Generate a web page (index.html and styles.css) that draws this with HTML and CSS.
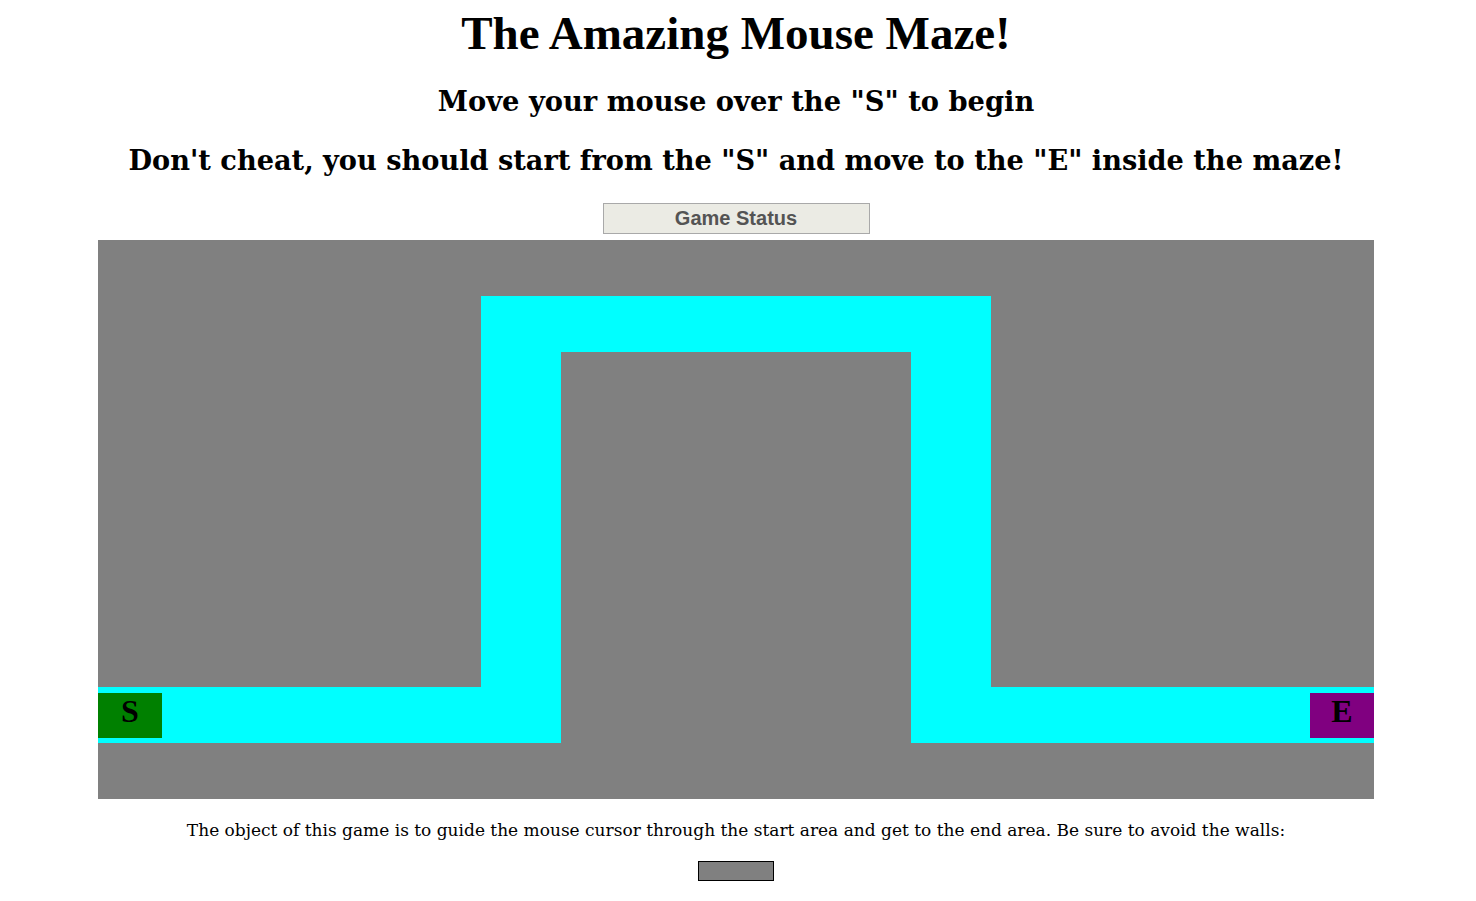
FILE: index.html
```html
<!DOCTYPE html>
<html>
<head>
<meta charset="utf-8">
<title>The Amazing Mouse Maze!</title>
<link rel="stylesheet" href="styles.css">
</head>
<body>
<h1 class="title">The Amazing Mouse Maze!</h1>
<h2 class="sub">Move your mouse over the "S" to begin</h2>
<h2 class="sub sub2">Don't cheat, you should start from the "S" and move to the "E" inside the maze!</h2>
<div class="status-row"><button class="status" disabled>Game Status</button></div>
<div class="maze">
  <div class="path p-left"><div class="start">S</div></div>
  <div class="path p-lv"></div>
  <div class="path p-top"></div>
  <div class="path p-rv"></div>
  <div class="path p-right"><div class="end">E</div></div>
</div>
<p class="desc">The object of this game is to guide the mouse cursor through the start area and get to the end area. Be sure to avoid the walls:</p>
<div class="wall-row"><div class="wall-sample"></div></div>
</body>
</html>
```
FILE: styles.css
```css
html, body { margin: 0; padding: 0; background: #fff; }
body { padding: 0 10px 0 6px; font-family: "DejaVu Serif", serif; color: #000; }
.title {
  font-family: "Liberation Serif", serif;
  font-weight: bold;
  font-size: 47px;
  line-height: 56px;
  text-align: center;
  margin: 5px 0 0;
}
.sub {
  font-family: "DejaVu Serif", serif;
  font-weight: bold;
  font-size: 27.3px;
  line-height: 40px;
  text-align: center;
  margin: 20px 0 0;
}
.sub2 { margin-top: 19px; font-size: 27.2px; }
.status-row { display: flex; justify-content: center; margin-top: 23px; }
.status {
  width: 267px;
  height: 31px;
  background: #ebebe4;
  border: 1px solid #a9a9a9;
  color: #545454;
  font-family: "Liberation Sans", Arial, sans-serif;
  font-weight: bold;
  font-size: 20px;
  padding: 0;
}
.maze {
  width: 1276px;
  height: 559px;
  margin: 6px auto 0;
  background: #808080;
  display: grid;
  grid-template-columns: 383px 80px 350px 80px 383px;
  grid-template-rows: 56px 56px 335px 56px 56px;
}
.path { background: #00ffff; }
.p-left { grid-column: 1 / 3; grid-row: 4; display: flex; align-items: flex-start; padding-top: 6px; }
.p-lv { grid-column: 2; grid-row: 2 / 5; }
.p-top { grid-column: 2 / 5; grid-row: 2; }
.p-rv { grid-column: 4; grid-row: 2 / 5; }
.p-right { grid-column: 4 / 6; grid-row: 4; display: flex; justify-content: flex-end; align-items: flex-start; padding-top: 6px; }
.start, .end {
  width: 64px;
  height: 45px;
  font-family: "Liberation Serif", serif;
  font-weight: bold;
  font-size: 32px;
  line-height: 36px;
  text-align: center;
}
.start { background: #008000; }
.end { background: #800080; }
.desc {
  font-family: "DejaVu Serif", serif;
  font-size: 17px;
  line-height: 22px;
  text-align: center;
  margin: 20px 0 0;
}
.wall-row { display: flex; justify-content: center; margin-top: 20px; }
.wall-sample {
  width: 74px;
  height: 18px;
  background: #808080;
  border: 1px solid #000;
}
```
